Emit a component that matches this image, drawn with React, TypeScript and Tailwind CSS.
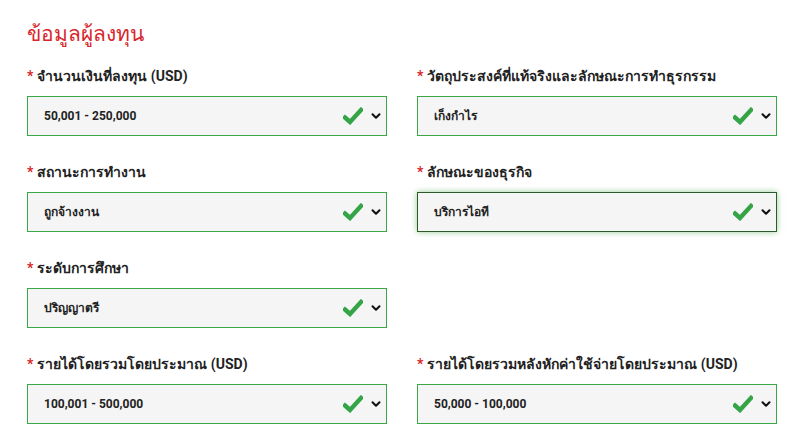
import { ChevronDown } from 'lucide-react'

interface Field {
    label: string
    value: string
    focused?: boolean
}

const rows: (Field | null)[][] = [
    [
        { label: 'จำนวนเงินที่ลงทุน (USD)', value: '50,001 - 250,000' },
        { label: 'วัตถุประสงค์ที่แท้จริงและลักษณะการทำธุรกรรม', value: 'เก็งกำไร' },
    ],
    [
        { label: 'สถานะการทำงาน', value: 'ถูกจ้างงาน' },
        { label: 'ลักษณะของธุรกิจ', value: 'บริการไอที', focused: true },
    ],
    [{ label: 'ระดับการศึกษา', value: 'ปริญญาตรี' }, null],
    [
        { label: 'รายได้โดยรวมโดยประมาณ (USD)', value: '100,001 - 500,000' },
        { label: 'รายได้โดยรวมหลังหักค่าใช้จ่ายโดยประมาณ (USD)', value: '50,000 - 100,000' },
    ],
]

function Check() {
    return (
        <svg width="20" height="18" viewBox="0 0 20 18" className="shrink-0">
            <path d="M2 10.5 L7 15 L18 3" fill="none" stroke="#34a446" strokeWidth="4.4" strokeLinecap="square" />
        </svg>
    )
}

function SelectField({ field }: { field: Field }) {
    return (
        <div>
            <div className="h-5 flex items-center text-[14px] font-bold text-[#222]">
                <span className="text-[#d7262c] mr-[4px]">*</span>
                {field.label}
            </div>
            <div
                className={
                    field.focused
                        ? 'mt-[10px] h-10 flex items-center bg-[#f5f5f5] border border-[#2c5a2c] shadow-[0_0_6px_rgba(60,160,60,0.55)] pl-4 pr-[3px]'
                        : 'mt-[10px] h-10 flex items-center bg-[#f5f5f5] border border-[#3aa845] pl-4 pr-[3px]'
                }
            >
                <span className="flex-1 text-[12px] font-bold text-[#222]">{field.value}</span>
                <Check />
                <ChevronDown className="size-[14px] ml-[6px] text-[#111]" strokeWidth={3.5} />
            </div>
        </div>
    )
}

export default function App() {
    return (
        <div
            className="w-[796px] h-[442px] bg-white pl-[27px] pt-[18px] overflow-hidden"
            style={{ fontFamily: 'Roboto, "Liberation Sans", "Noto Sans", sans-serif' }}
        >
            <h2 className="text-[21px] leading-8 text-[#d7262c]">ข้อมูลผู้ลงทุน</h2>
            <div className="mt-4 grid grid-cols-[360px_360px] gap-x-[30px] gap-y-[26px]">
                {rows.flatMap((row, i) =>
                    row.map((f, j) =>
                        f ? <SelectField key={`${i}-${j}`} field={f} /> : <div key={`${i}-${j}`} />
                    )
                )}
            </div>
        </div>
    )
}
